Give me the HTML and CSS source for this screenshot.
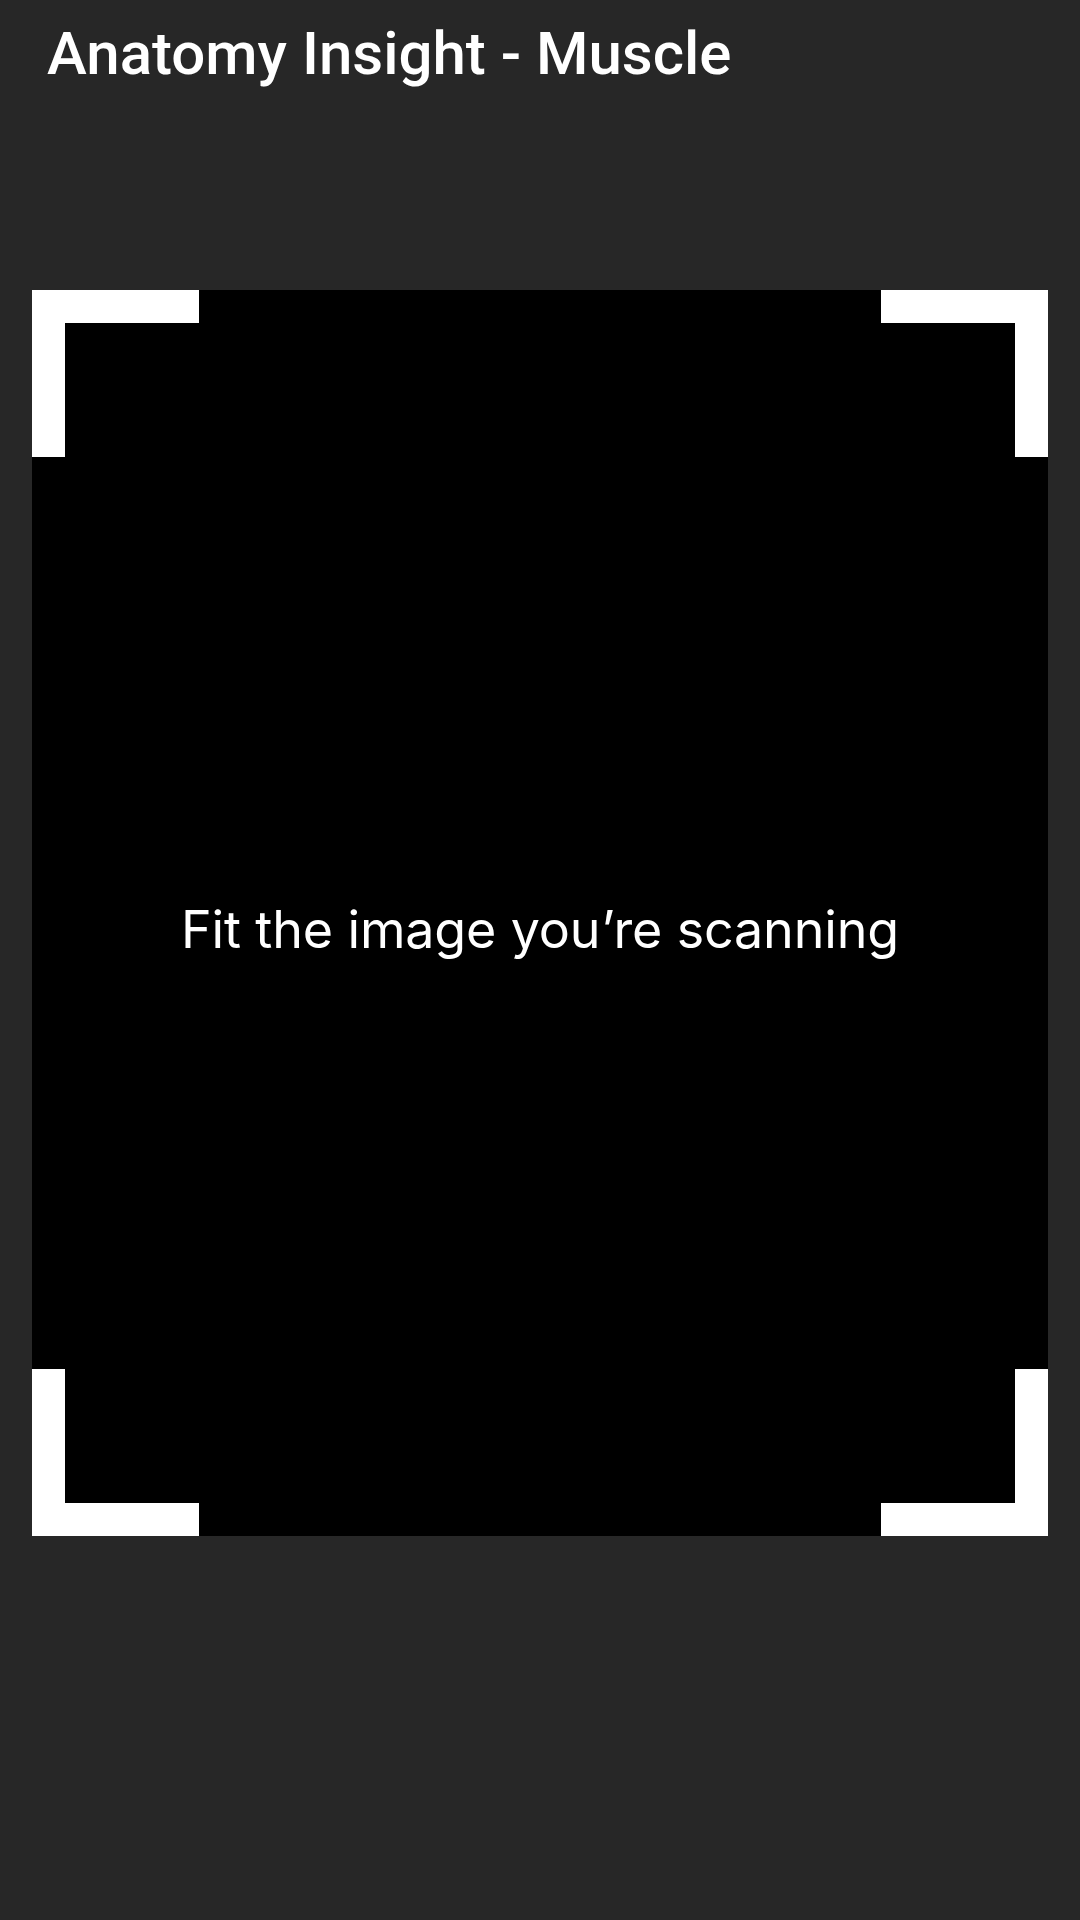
FILE: index.html
```html
<!DOCTYPE html>
<html lang="en">
<head>
<meta charset="utf-8">
<title>Anatomy Insight - Muscle</title>
<link rel="stylesheet" href="styles.css">
</head>
<body>
<div class="screen">
  <header class="topbar">
    <h1 class="title">Anatomy Insight - Muscle</h1>
  </header>
  <main class="viewfinder">
    <span class="corner tl"></span>
    <span class="corner tr"></span>
    <span class="corner bl"></span>
    <span class="corner br"></span>
    <p class="hint">Fit the image you’re scanning</p>
  </main>
</div>
</body>
</html>
```
FILE: styles.css
```css
html, body {
  margin: 0;
  padding: 0;
  background: #272727;
}
.screen {
  width: 1080px;
  height: 1920px;
  display: flex;
  flex-direction: column;
  background: #272727;
}
.topbar {
  height: 290px;
  padding: 0 0 0 47px;
  box-sizing: border-box;
}
.title {
  margin: 0;
  padding-top: 20px;
  font-family: Roboto, "Liberation Sans", sans-serif;
  font-weight: 500;
  font-size: 60px;
  line-height: 68px;
  color: #ffffff;
  letter-spacing: 0;
}
.viewfinder {
  position: relative;
  margin: 0 32px;
  height: 1246px;
  background: #000000;
  display: flex;
  align-items: center;
  justify-content: center;
}
.corner {
  position: absolute;
  width: 167px;
  height: 167px;
  box-sizing: border-box;
  border: 0 solid #ffffff;
}
.corner.tl { top: 0; left: 0; border-top-width: 33px; border-left-width: 33px; }
.corner.tr { top: 0; right: 0; border-top-width: 33px; border-right-width: 33px; }
.corner.bl { bottom: 0; left: 0; border-bottom-width: 33px; border-left-width: 33px; }
.corner.br { bottom: 0; right: 0; border-bottom-width: 33px; border-right-width: 33px; }
.hint {
  margin: 34px 0 0 0;
  font-family: Inter, "Open Sans", sans-serif;
  font-weight: 400;
  font-size: 52px;
  line-height: 64px;
  color: #ffffff;
  letter-spacing: -0.15px;
}
```
